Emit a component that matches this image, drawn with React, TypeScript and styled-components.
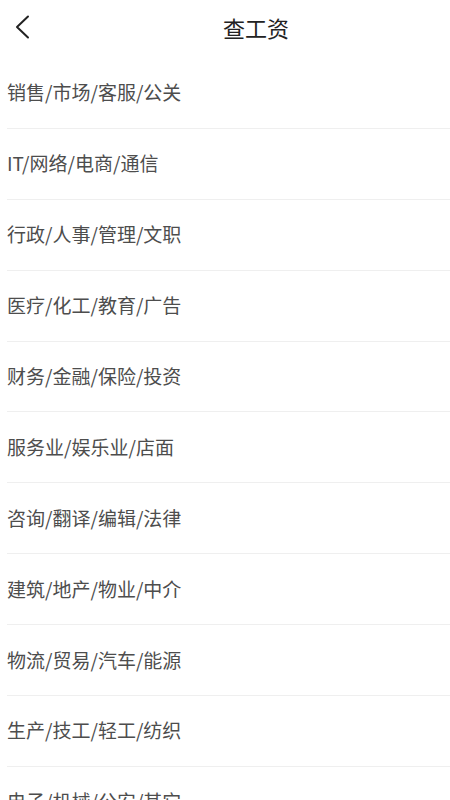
import React from 'react'
import styled, { createGlobalStyle } from 'styled-components'

const categories = [
  '销售/市场/客服/公关',
  'IT/网络/电商/通信',
  '行政/人事/管理/文职',
  '医疗/化工/教育/广告',
  '财务/金融/保险/投资',
  '服务业/娱乐业/店面',
  '咨询/翻译/编辑/法律',
  '建筑/地产/物业/中介',
  '物流/贸易/汽车/能源',
  '生产/技工/轻工/纺织',
  '电子/机械/公安/其它',
]

const App = () => {
  return (
    <Page>
      <Global />
      <Header>
        <Back aria-label="返回">
          <svg width="16" height="24" viewBox="0 0 16 24" fill="none">
            <path d="M14 1.5L3 12L14 22.5" stroke="#222" strokeWidth="2" strokeLinecap="round" strokeLinejoin="round" />
          </svg>
        </Back>
        <Title>查工资</Title>
      </Header>
      <List>
        {categories.map((c) => (
          <Row key={c}>{c}</Row>
        ))}
      </List>
    </Page>
  )
}

export default App

const Global = createGlobalStyle`
    html, body {
        margin: 0;
        padding: 0;
        background: #fff;
        font-family: "Noto Sans CJK SC", "Noto Sans", sans-serif;
    }
`
const Page = styled.div`
    width: 100%;
    height: 800px;
    overflow: hidden;
    background: #fff;
`
const Header = styled.div`
    height: 58px;
    display: flex;
    align-items: center;
`
const Back = styled.div`
    width: 62px;
    height: 58px;
    display: flex;
    align-items: center;
    padding-left: 14px;
    box-sizing: border-box;
    margin-top: -4px;
`
const Title = styled.div`
    flex: 1;
    text-align: center;
    font-size: 22px;
    color: #222;
    margin-top: -4px;
`
const List = styled.div`
    display: flex;
    flex-direction: column;
    padding-left: 7px;
`
const Row = styled.div`
    height: 70.9px;
    display: flex;
    align-items: center;
    padding-bottom: 2px;
    box-sizing: border-box;
    border-bottom: 1px solid #efefef;
    font-size: 19px;
    color: #4d4d4d;
    flex-shrink: 0;
`
